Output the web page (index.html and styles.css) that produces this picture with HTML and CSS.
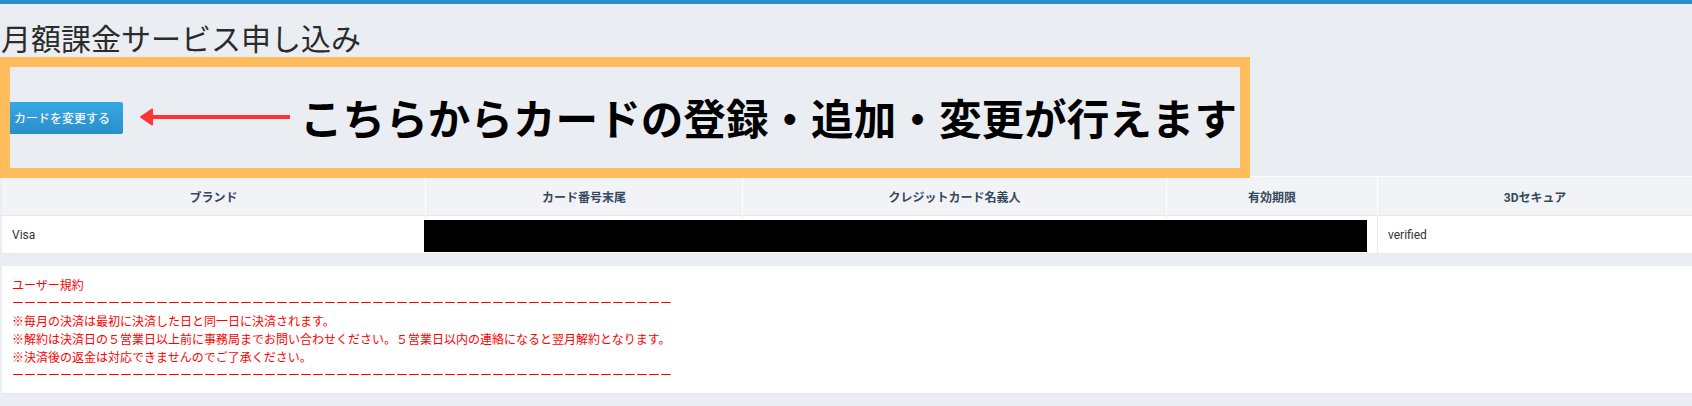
FILE: index.html
```html
<!DOCTYPE html>
<html lang="ja">
<head>
    <meta charset="UTF-8">
    <meta name="viewport" content="width=device-width, initial-scale=1.0">
    <title>月額課金サービス申し込み</title>
    <link rel="stylesheet" href="styles.css">
</head>
<body>
    <div class="top-bar"></div>

    <h1 class="page-title">月額課金サービス申し込み</h1>

    <div class="card-action">
        <button type="button" class="btn">カードを変更する</button>
    </div>

    <!-- 注釈 -->
    <div class="callout">
        <svg class="callout-arrow" width="152" height="20" viewBox="0 0 152 20">
            <path d="M151 8H14V2.500a1 1 0 0 0-1.500-.8L1.500 9.200a1 1 0 0 0 0 1.600l11 7.500a1 1 0 0 0 1.500-.8V12H151z" fill="#ff3333"/>
        </svg>
        <span class="callout-text">こちらからカードの登録・追加・変更が行えます</span>
    </div>

    <table class="card-table">
        <thead>
            <tr>
                <th class="col-brand">ブランド</th>
                <th class="col-number">カード番号末尾</th>
                <th class="col-name">クレジットカード名義人</th>
                <th class="col-expire">有効期限</th>
                <th>3Dセキュア</th>
            </tr>
        </thead>
        <tbody>
            <tr>
                <td>Visa</td>
                <td></td>
                <td></td>
                <td></td>
                <td>verified</td>
            </tr>
        </tbody>
    </table>
    <div class="redacted"></div>

    <div class="terms">
        <p>ユーザー規約</p>
        <p>ーーーーーーーーーーーーーーーーーーーーーーーーーーーーーーーーーーーーーーーーーーーーーーーーーーーーーーー</p>
        <p>※毎月の決済は最初に決済した日と同一日に決済されます。</p>
        <p>※解約は決済日の５営業日以上前に事務局までお問い合わせください。５営業日以内の連絡になると翌月解約となります。</p>
        <p>※決済後の返金は対応できませんのでご了承ください。</p>
        <p>ーーーーーーーーーーーーーーーーーーーーーーーーーーーーーーーーーーーーーーーーーーーーーーーーーーーーーーー</p>
    </div>
</body>
</html>
```

FILE: styles.css
```css
* {
    margin: 0;
    padding: 0;
    box-sizing: border-box;
}

body {
    position: relative;
    font-family: Roboto, "Noto Sans CJK JP", sans-serif;
    font-size: 12px;
    background: #eaedf2;
    color: #333;
    height: 406px;
    overflow: hidden;
}

.top-bar {
    height: 4px;
    background: #2a8ec8;
}

.page-title {
    font-size: 30px;
    font-weight: 400;
    line-height: 36px;
    margin-top: 18px;
    padding-left: 1px;
    color: #2b2b2b;
}

.card-action {
    padding-top: 44px;
    height: 118px;
}

.btn {
    display: block;
    width: 123px;
    height: 32px;
    padding: 0 0 2px 14px;
    text-align: left;
    font-family: inherit;
    font-size: 12px;
    color: #fff;
    text-shadow: 0 0 1px rgba(255, 255, 255, 0.4);
    background: linear-gradient(#34a9e6, #2a8ec8);
    border: none;
    border-radius: 2px;
}

.callout {
    position: absolute;
    left: 0;
    top: 57px;
    width: 1250px;
    height: 121px;
    border: 10px solid #ffbc5a;
    display: flex;
    align-items: center;
}

.callout-arrow {
    margin-left: 129px;
    margin-top: -1px;
    flex: none;
}

.callout-text {
    margin-left: 9px;
    margin-top: -2px;
    font-size: 42.6px;
    font-weight: 700;
    color: #000;
    white-space: nowrap;
}

.card-table {
    margin-left: 2px;
    width: 1690px;
    table-layout: fixed;
    border-collapse: separate;
    border-spacing: 0;
    background: #fff;
}

.card-table th {
    height: 40px;
    font-size: 12px;
    font-weight: 700;
    color: #34495e;
    background: #f1f3f6;
    border-top: 1px solid #fff;
    border-right: 1px solid #fff;
    border-bottom: 1px solid #e4e7ec;
}

.card-table td {
    height: 38px;
    padding: 0 10px;
    border-right: 1px solid #e9edf2;
    border-bottom: 1px solid #e4e7ec;
}

.card-table th:last-child,
.card-table td:last-child {
    border-right: none;
}

.col-brand {
    width: 424px;
}

.col-number {
    width: 317px;
}

.col-name {
    width: 424px;
}

.col-expire {
    width: 211px;
}

.redacted {
    position: absolute;
    left: 424px;
    top: 220px;
    width: 943px;
    height: 32px;
    background: #000;
}

.terms {
    margin: 12px 0 0 2px;
    height: 128px;
    padding: 11px 10px;
    background: #fff;
    color: #f00;
    line-height: 18px;
    border-bottom: 1px solid #e4e7ec;
}
```
